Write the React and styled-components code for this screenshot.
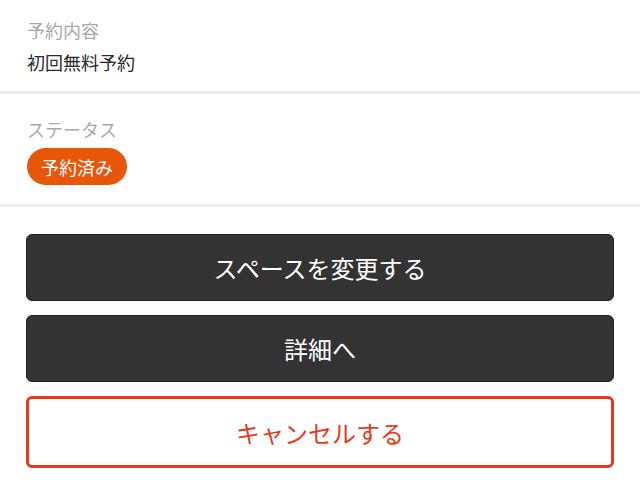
import React from "react";
import styled, { createGlobalStyle } from "styled-components";

const Global = createGlobalStyle`
  html, body { margin: 0; padding: 0; background: #fff; }
  body { font-family: "Noto Sans CJK JP", "Noto Sans", sans-serif; -webkit-font-smoothing: antialiased; }
`;

const Page = styled.div`
  width: 640px;
  height: 480px;
  overflow: hidden;
  background: #fff;
  display: flex;
  flex-direction: column;
`;

const Section = styled.section`
  padding: ${(p) => p.$top}px 27px ${(p) => p.$bottom}px;
  border-bottom: 3px solid #ececec;
  display: flex;
  flex-direction: column;
  align-items: flex-start;
  gap: 6px;
`;

const Label = styled.div`
  font-size: 18px;
  line-height: 26px;
  color: #a8a8a8;
`;

const Value = styled.div`
  font-size: 18px;
  line-height: 26px;
  color: #2a2a2a;
`;

const Badge = styled.span`
  display: inline-flex;
  align-items: center;
  height: 37px;
  padding: 0 14px;
  border-radius: 19px;
  background: #e8560a;
  color: #fff;
  font-size: 18px;
`;

const Actions = styled.div`
  padding: 27px 26px 0;
  display: flex;
  flex-direction: column;
  gap: 14px;
`;

const Button = styled.button`
  height: ${(p) => (p.$outline ? 72 : 67)}px;
  width: 100%;
  border-radius: 6px;
  font-family: inherit;
  font-size: 24px;
  display: flex;
  align-items: center;
  justify-content: center;
  cursor: pointer;
  background: ${(p) => (p.$outline ? "#fff" : "#333333")};
  color: ${(p) => (p.$outline ? "#e8391a" : "#fff")};
  border: ${(p) => (p.$outline ? "3px solid #e8391a" : "1px solid #222")};
`;

export default function App() {
  return (
    <Page>
      <Global />
      <Section $top={17} $bottom={16}>
        <Label>予約内容</Label>
        <Value>初回無料予約</Value>
      </Section>
      <Section $top={22} $bottom={19}>
        <Label>ステータス</Label>
        <Badge>予約済み</Badge>
      </Section>
      <Actions>
        <Button>スペースを変更する</Button>
        <Button>詳細へ</Button>
        <Button $outline>キャンセルする</Button>
      </Actions>
    </Page>
  );
}
